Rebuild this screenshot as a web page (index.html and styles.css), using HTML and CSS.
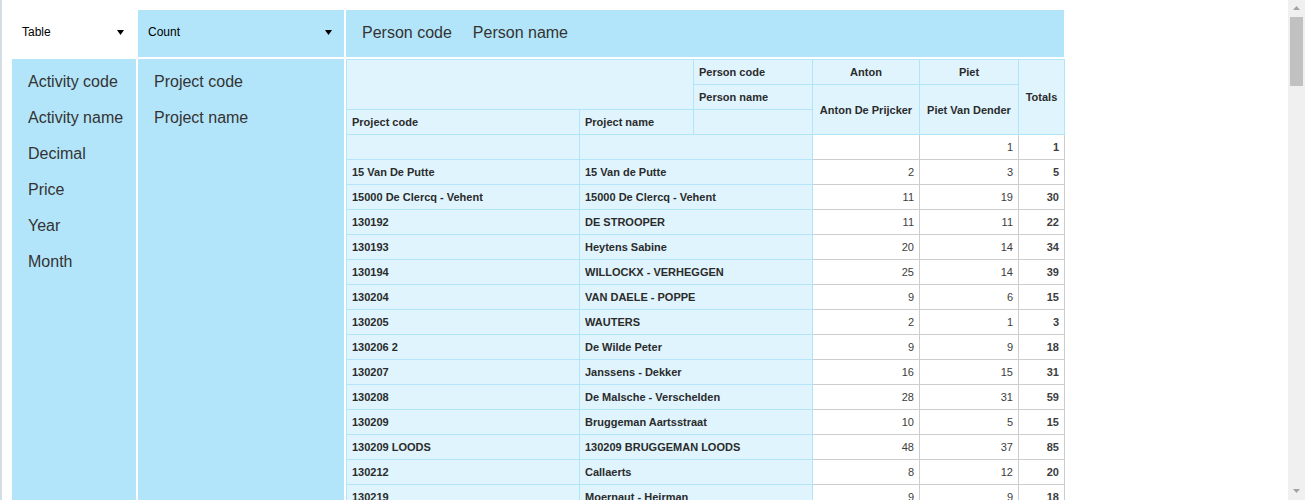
FILE: index.html
```html
<!DOCTYPE html>
<html>
<head>
<meta charset="utf-8">
<title>Pivot</title>
<link rel="stylesheet" href="styles.css">
</head>
<body>
<div class="page">
  <div class="pvt-ui">
    <div class="select-cell renderer">
      <span>Table</span>
      <svg class="caret" width="7" height="5" viewBox="0 0 7 5"><polygon points="0,0 7,0 3.5,5"/></svg>
    </div>
    <div class="select-cell vals">
      <span>Count</span>
      <svg class="caret" width="7" height="5" viewBox="0 0 7 5"><polygon points="0,0 7,0 3.5,5"/></svg>
    </div>
    <ul class="axis axis-cols">
      <li>Person code</li>
      <li>Person name</li>
    </ul>
    <ul class="axis axis-unused">
      <li>Activity code</li>
      <li>Activity name</li>
      <li>Decimal</li>
      <li>Price</li>
      <li>Year</li>
      <li>Month</li>
    </ul>
    <ul class="axis axis-rows">
      <li>Project code</li>
      <li>Project name</li>
    </ul>
    <div class="renderer-area">
      <table class="pvt-table">
        <colgroup>
          <col class="w-code"><col class="w-name"><col class="w-label"><col class="w-anton"><col class="w-piet"><col class="w-total">
        </colgroup>
        <thead>
          <tr>
            <th colspan="2" rowspan="2"></th>
            <th>Person code</th>
            <th class="col-label">Anton</th>
            <th class="col-label">Piet</th>
            <th class="col-label" rowspan="3">Totals</th>
          </tr>
          <tr>
            <th>Person name</th>
            <th class="col-label" rowspan="2">Anton De Prijcker</th>
            <th class="col-label" rowspan="2">Piet Van Dender</th>
          </tr>
          <tr>
            <th>Project code</th>
            <th>Project name</th>
            <th></th>
          </tr>
        </thead>
        <tbody>
          <tr><th></th><th colspan="2"></th><td></td><td>1</td><td class="total">1</td></tr>
          <tr><th>15 Van De Putte</th><th colspan="2">15 Van de Putte</th><td>2</td><td>3</td><td class="total">5</td></tr>
          <tr><th>15000 De Clercq - Vehent</th><th colspan="2">15000 De Clercq - Vehent</th><td>11</td><td>19</td><td class="total">30</td></tr>
          <tr><th>130192</th><th colspan="2">DE STROOPER</th><td>11</td><td>11</td><td class="total">22</td></tr>
          <tr><th>130193</th><th colspan="2">Heytens Sabine</th><td>20</td><td>14</td><td class="total">34</td></tr>
          <tr><th>130194</th><th colspan="2">WILLOCKX - VERHEGGEN</th><td>25</td><td>14</td><td class="total">39</td></tr>
          <tr><th>130204</th><th colspan="2">VAN DAELE - POPPE</th><td>9</td><td>6</td><td class="total">15</td></tr>
          <tr><th>130205</th><th colspan="2">WAUTERS</th><td>2</td><td>1</td><td class="total">3</td></tr>
          <tr><th>130206 2</th><th colspan="2">De Wilde Peter</th><td>9</td><td>9</td><td class="total">18</td></tr>
          <tr><th>130207</th><th colspan="2">Janssens - Dekker</th><td>16</td><td>15</td><td class="total">31</td></tr>
          <tr><th>130208</th><th colspan="2">De Malsche - Verschelden</th><td>28</td><td>31</td><td class="total">59</td></tr>
          <tr><th>130209</th><th colspan="2">Bruggeman Aartsstraat</th><td>10</td><td>5</td><td class="total">15</td></tr>
          <tr><th>130209 LOODS</th><th colspan="2">130209 BRUGGEMAN LOODS</th><td>48</td><td>37</td><td class="total">85</td></tr>
          <tr><th>130212</th><th colspan="2">Callaerts</th><td>8</td><td>12</td><td class="total">20</td></tr>
          <tr><th>130219</th><th colspan="2">Moernaut - Heirman</th><td>9</td><td>9</td><td class="total">18</td></tr>
        </tbody>
      </table>
    </div>
  </div>
</div>
<div class="fake-scrollbar" aria-hidden="true">
  <svg class="sb-arrow" width="7" height="4" viewBox="0 0 7 4"><polygon points="0,4 7,4 3.5,0"/></svg>
  <div class="sb-thumb"></div>
  <div class="sb-space"></div>
  <svg class="sb-arrow" width="7" height="4" viewBox="0 0 7 4"><polygon points="0,0 7,0 3.5,4"/></svg>
</div>
</body>
</html>
```

FILE: styles.css
```css
html, body {
  margin: 0;
  padding: 0;
  background: #fff;
}

html {
  scrollbar-width: none;
}

body {
  font-family: "Liberation Sans", Arial, sans-serif;
  color: #333;
}

.page {
  border-left: 2px solid #d3dde4;
  padding: 10px 0 0 10px;
  min-height: 3380px;
  box-sizing: border-box;
}

.pvt-ui {
  display: grid;
  grid-template-columns: 124px 206px 718px;
  grid-template-rows: 47px auto;
  column-gap: 2px;
  row-gap: 2px;
  min-height: 3360px;
}

.select-cell {
  display: flex;
  align-items: center;
  justify-content: space-between;
  padding: 0 12px 3px 10px;
  font-size: 12px;
  color: #000;
}

.renderer {
  background: #fff;
}

.vals {
  background: #b3e5fa;
}

.caret {
  display: block;
  fill: #000;
}

.axis {
  margin: 0;
  background: #b3e5fa;
  list-style: none;
  font-size: 16px;
  color: #333;
}

.axis li {
  height: 36px;
  line-height: 36px;
  white-space: nowrap;
}

.axis-cols {
  display: flex;
  align-items: center;
  padding: 0 0 2px 5px;
}

.axis-cols li {
  padding: 0 11px 0 11px;
}

.axis-cols li + li {
  padding-left: 10px;
}

.axis-unused,
.axis-rows {
  padding: 5px 0 0 16px;
}

.renderer-area {
  background: #fff;
}

.pvt-table {
  border-collapse: collapse;
  table-layout: fixed;
  width: 718px;
  font-size: 11px;
  line-height: 14px;
  text-align: left;
}

.w-code { width: 233px; }
.w-name { width: 114px; }
.w-label { width: 119px; }
.w-anton { width: 107px; }
.w-piet { width: 99px; }
.w-total { width: 46px; }

.pvt-table th {
  background: #dff4fd;
  border: 1px solid #b3e5fa;
  padding: 5px;
  font-weight: bold;
  color: #2b2b2b;
  white-space: nowrap;
  overflow: hidden;
}

.pvt-table th.col-label {
  text-align: center;
}

.pvt-table td {
  background: #fff;
  border: 1px solid #cdcdcd;
  padding: 5px;
  color: #3d3d3d;
  text-align: right;
  white-space: nowrap;
}

.pvt-table td.total {
  font-weight: bold;
}

.fake-scrollbar {
  position: fixed;
  top: 0;
  right: 0;
  width: 17px;
  height: 100vh;
  background: #f0f0f0;
  display: flex;
  flex-direction: column;
  align-items: center;
}

.sb-arrow {
  display: block;
  flex: none;
  fill: #a3a3a3;
  margin: 6px 0 7px;
}

.sb-thumb {
  flex: none;
  width: 13px;
  height: 69px;
  background: #c1c1c1;
}

.sb-space {
  flex: 1;
}
```
